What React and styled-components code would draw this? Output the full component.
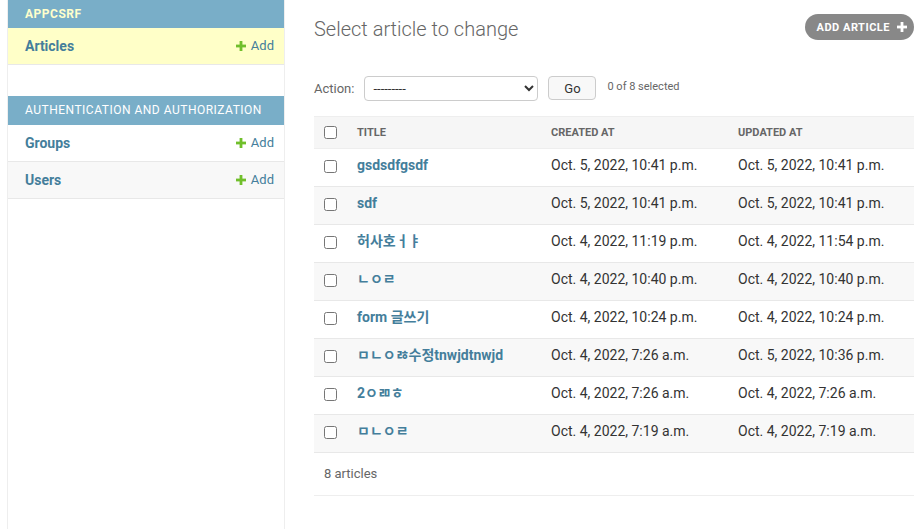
import styled, { createGlobalStyle } from 'styled-components'

const GlobalStyle = createGlobalStyle`
  html, body {
    margin: 0;
    padding: 0;
    background: #fff;
  }
  body {
    font-family: Roboto, "Noto Sans CJK KR", "Liberation Sans", sans-serif;
    font-size: 14px;
    color: #333;
    overflow: hidden;
  }
`;

const Page = styled.div`
  display: flex;
  width: 916px;
  min-height: 529px;
`;

const ToggleStrip = styled.div`
  width: 7px;
  border-right: 1px solid #eee;
  flex-shrink: 0;
`;

const Sidebar = styled.nav`
  width: 276px;
  flex-shrink: 0;
  border-right: 1px solid #eee;
  min-height: 529px;
`;

const Module = styled.table`
  width: 100%;
  border-collapse: collapse;
  margin-bottom: 31px;
`;

const Caption = styled.caption`
  background: #79aec8;
  color: ${p => (p.$current ? '#ffc' : '#fff')};
  font-weight: ${p => (p.$current ? 700 : 400)};
  text-align: left;
  text-transform: uppercase;
  font-size: 12px;
  letter-spacing: 0.5px;
  padding: 6px 17px ${p => (p.$current ? 6 : 7)}px;
  line-height: 16px;
`;

const NavRow = styled.tr`
  background: ${p => (p.$current ? '#ffffc8' : p.$alt ? '#f8f8f8' : '#fff')};
  border-bottom: 1px solid #e8e8e8;
`;

const NavName = styled.th`
  text-align: left;
  padding: 10px 16px 10px 17px;
  font-size: 14px;
  font-weight: 700;
  color: #447e9b;
  line-height: 16px;
`;

const NavAdd = styled.td`
  text-align: right;
  padding: 10px 10px 10px 0;
  font-size: 13px;
  color: #447e9b;
  line-height: 16px;
  white-space: nowrap;
`;

const PlusIcon = ({ color = '#70bf2b', size = 10 }) => (
  <svg width={size} height={size} viewBox="0 0 10 10" style={{ verticalAlign: '-1px', marginRight: 5 }}>
    <rect x="3.6" y="0" width="2.8" height="10" fill={color} />
    <rect x="0" y="3.6" width="10" height="2.8" fill={color} />
  </svg>
);

const Main = styled.main`
  flex: 1;
  padding: 0 2px 0 29px;
`;

const HeaderBar = styled.div`
  display: flex;
  justify-content: space-between;
  align-items: flex-start;
  height: 66px;
`;

const Title = styled.h1`
  margin: 17px 0 0 0;
  font-size: 20px;
  font-weight: 300;
  color: #666;
  line-height: 24px;
`;

const AddButton = styled.a`
  margin-top: 14px;
  display: flex;
  align-items: center;
  gap: 7px;
  height: 26px;
  box-sizing: border-box;
  padding: 0 2px 0 12px;
  background: #888;
  border-radius: 15px;
  color: #fff;
  font-size: 11px;
  font-weight: 700;
  letter-spacing: 0.5px;
  text-transform: uppercase;
  text-decoration: none;
`;

const ActionBar = styled.div`
  display: flex;
  align-items: center;
  height: 24px;
  margin: 10px 0 16px;
  font-size: 13px;
  color: #666;
`;

const ActionLabel = styled.label`
  margin-right: 10px;
`;

const ActionSelect = styled.select`
  width: 174px;
  height: 25px;
  border: 1px solid #ccc;
  border-radius: 4px;
  background: #fff;
  font-family: Roboto, sans-serif;
  font-size: 13px;
  color: #333;
  padding: 0 4px;
`;

const GoButton = styled.button`
  margin-left: 10px;
  width: 48px;
  height: 24px;
  border: 1px solid #ccc;
  border-radius: 4px;
  background: #f8f8f8;
  font-family: Roboto, sans-serif;
  font-size: 13px;
  color: #333;
  padding: 0;
`;

const SelectedCount = styled.span`
  margin-left: 11px;
  font-size: 11px;
  color: #666;
  align-self: flex-start;
  margin-top: 4px;
`;

const ResultTable = styled.table`
  width: 600px;
  border-collapse: collapse;
  table-layout: fixed;
  border-top: 1px solid #eee;
`;

const Th = styled.th`
  background: #f6f6f6;
  text-align: left;
  font-size: 11px;
  font-weight: 700;
  color: #666;
  text-transform: uppercase;
  padding: 0 10px;
  height: 32px;
  border-bottom: 1px solid #eee;
  width: ${p => p.$w}px;
  box-sizing: border-box;
`;

const Row = styled.tr`
  background: ${p => (p.$alt ? '#f8f8f8' : '#fff')};
  border-bottom: 1px solid #e8e8e8;
`;

const Td = styled.td`
  height: 38px;
  padding: 8px 10px 0;
  vertical-align: top;
  font-size: 14px;
  line-height: 16px;
  color: #333;
  white-space: nowrap;
  box-sizing: border-box;
`;

const TitleLink = styled.a`
  color: #447e9b;
  font-weight: 700;
  text-decoration: none;
`;

const CheckBox = styled.input`
  margin: 0;
  width: 13px;
  height: 13px;
  vertical-align: middle;
`;

const Paginator = styled.p`
  margin: 0;
  padding: 12px 10px 13px;
  font-size: 13px;
  color: #666;
  border-bottom: 1px solid #eee;
  line-height: 17px;
`;

const articles = [
  { title: 'gsdsdfgsdf', created: 'Oct. 5, 2022, 10:41 p.m.', updated: 'Oct. 5, 2022, 10:41 p.m.' },
  { title: 'sdf', created: 'Oct. 5, 2022, 10:41 p.m.', updated: 'Oct. 5, 2022, 10:41 p.m.' },
  { title: '허사호ㅓㅑ', created: 'Oct. 4, 2022, 11:19 p.m.', updated: 'Oct. 4, 2022, 11:54 p.m.' },
  { title: 'ㄴㅇㄹ', created: 'Oct. 4, 2022, 10:40 p.m.', updated: 'Oct. 4, 2022, 10:40 p.m.' },
  { title: 'form 글쓰기', created: 'Oct. 4, 2022, 10:24 p.m.', updated: 'Oct. 4, 2022, 10:24 p.m.' },
  { title: 'ㅁㄴㅇㅀ수정tnwjdtnwjd', created: 'Oct. 4, 2022, 7:26 a.m.', updated: 'Oct. 5, 2022, 10:36 p.m.' },
  { title: '2ㅇㄻㅎ', created: 'Oct. 4, 2022, 7:26 a.m.', updated: 'Oct. 4, 2022, 7:26 a.m.' },
  { title: 'ㅁㄴㅇㄹ', created: 'Oct. 4, 2022, 7:19 a.m.', updated: 'Oct. 4, 2022, 7:19 a.m.' },
];

const App = () => {
  return (
    <>
      <GlobalStyle />
      <Page>
        <ToggleStrip />
        <Sidebar>
          <Module>
            <Caption $current>Appcsrf</Caption>
            <tbody>
              <NavRow $current>
                <NavName>Articles</NavName>
                <NavAdd><PlusIcon />Add</NavAdd>
              </NavRow>
            </tbody>
          </Module>
          <Module>
            <Caption>Authentication and Authorization</Caption>
            <tbody>
              <NavRow>
                <NavName>Groups</NavName>
                <NavAdd><PlusIcon />Add</NavAdd>
              </NavRow>
              <NavRow $alt>
                <NavName>Users</NavName>
                <NavAdd><PlusIcon />Add</NavAdd>
              </NavRow>
            </tbody>
          </Module>
        </Sidebar>

        <Main>
          <HeaderBar>
            <Title>Select article to change</Title>
            <AddButton>Add article <PlusIcon color="#fff" size={10} /></AddButton>
          </HeaderBar>

          <ActionBar>
            <ActionLabel>Action:</ActionLabel>
            <ActionSelect defaultValue="">
              <option value="">---------</option>
            </ActionSelect>
            <GoButton>Go</GoButton>
            <SelectedCount>0 of 8 selected</SelectedCount>
          </ActionBar>

          <ResultTable>
            <thead>
              <tr>
                <Th $w={33}><CheckBox type="checkbox" /></Th>
                <Th $w={194}>Title</Th>
                <Th $w={187}>Created at</Th>
                <Th $w={186}>Updated at</Th>
              </tr>
            </thead>
            <tbody>
              {articles.map((a, i) => (
                <Row key={i} $alt={i % 2 === 1}>
                  <Td><CheckBox type="checkbox" /></Td>
                  <Td><TitleLink>{a.title}</TitleLink></Td>
                  <Td>{a.created}</Td>
                  <Td>{a.updated}</Td>
                </Row>
              ))}
            </tbody>
          </ResultTable>
          <Paginator>8 articles</Paginator>
        </Main>
      </Page>
    </>
  )
}

export default App
